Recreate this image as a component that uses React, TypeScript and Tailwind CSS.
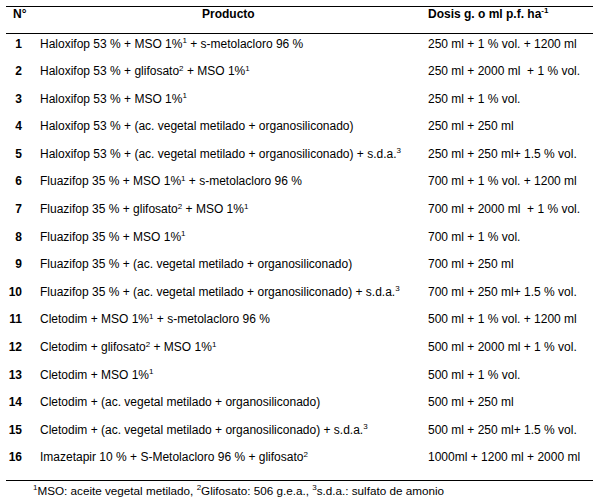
import React from "react";

type Row = { n: string; p: React.ReactNode; d: string };

const S = ({ c }: { c: string }) => <sup className="text-[8px] top-[-0.55em]">{c}</sup>;

const rows: Row[] = [
  { n: "1", p: <>Haloxifop 53 % + MSO 1%<S c="1" /> + s-metolacloro 96 %</>, d: "250 ml + 1 % vol. + 1200 ml" },
  { n: "2", p: <>Haloxifop 53 % + glifosato<S c="2" /> + MSO 1%<S c="1" /></>, d: "250 ml + 2000 ml\u00a0 + 1 % vol." },
  { n: "3", p: <>Haloxifop 53 % + MSO 1%<S c="1" /></>, d: "250 ml + 1 % vol." },
  { n: "4", p: <>Haloxifop 53 % + (ac. vegetal metilado + organosiliconado)</>, d: "250 ml + 250 ml" },
  { n: "5", p: <>Haloxifop 53 % + (ac. vegetal metilado + organosiliconado) + s.d.a.<S c="3" /></>, d: "250 ml + 250 ml+ 1.5 % vol." },
  { n: "6", p: <>Fluazifop 35 % + MSO 1%<S c="1" /> + s-metolacloro 96 %</>, d: "700 ml + 1 % vol. + 1200 ml" },
  { n: "7", p: <>Fluazifop 35 % + glifosato<S c="2" /> + MSO 1%<S c="1" /></>, d: "700 ml + 2000 ml\u00a0 + 1 % vol." },
  { n: "8", p: <>Fluazifop 35 % + MSO 1%<S c="1" /></>, d: "700 ml + 1 % vol." },
  { n: "9", p: <>Fluazifop 35 % + (ac. vegetal metilado + organosiliconado)</>, d: "700 ml + 250 ml" },
  { n: "10", p: <>Fluazifop 35 % + (ac. vegetal metilado + organosiliconado) + s.d.a.<S c="3" /></>, d: "700 ml + 250 ml+ 1.5 % vol." },
  { n: "11", p: <>Cletodim + MSO 1%<S c="1" /> + s-metolacloro 96 %</>, d: "500 ml + 1 % vol. + 1200 ml" },
  { n: "12", p: <>Cletodim + glifosato<S c="2" /> + MSO 1%<S c="1" /></>, d: "500 ml + 2000 ml + 1 % vol." },
  { n: "13", p: <>Cletodim + MSO 1%<S c="1" /></>, d: "500 ml + 1 % vol." },
  { n: "14", p: <>Cletodim + (ac. vegetal metilado + organosiliconado)</>, d: "500 ml + 250 ml" },
  { n: "15", p: <>Cletodim + (ac. vegetal metilado + organosiliconado) + s.d.a.<S c="3" /></>, d: "500 ml + 250 ml+ 1.5 % vol." },
  { n: "16", p: <>Imazetapir 10 % + S-Metolacloro 96 % + glifosato<S c="2" /></>, d: "1000ml + 1200 ml + 2000 ml" },
];

export default function App() {
  return (
    <div
      className="w-[600px] h-[497px] bg-white text-black text-[12px] leading-[14px] overflow-hidden"
      style={{ fontFamily: '"Liberation Sans", Arial, sans-serif' }}
    >
      <div className="ml-[6px] w-[587px] pt-[6px]">
        <div className="border-t border-black" />
        <div className="flex h-[26px] font-bold">
          <div className="w-[34px] pl-[7px]">N°</div>
          <div className="w-[388px] pl-[162px]">Producto</div>
          <div className="flex-1">
            Dosis g. o ml p.f. ha<sup className="text-[8px] top-[-0.6em]">-1</sup>
          </div>
        </div>
        <div className="border-t border-black" />
        <div className="flex flex-col">
          {rows.map((r) => (
            <div key={r.n} className="flex h-[27.6px] pt-[2.5px] whitespace-pre">
              <div className="w-[16px] text-right font-bold">{r.n}</div>
              <div className="w-[18px]" />
              <div className="w-[388px]">{r.p}</div>
              <div className="flex-1">{r.d}</div>
            </div>
          ))}
        </div>
        <div className="mt-[4px] border-t border-black" />
        <div className="pl-[27px] pt-[3px] text-[11.7px] leading-[13px]">
          <S c="1" />MSO: aceite vegetal metilado, <S c="2" />Glifosato: 506 g.e.a., <S c="3" />s.d.a.: sulfato de amonio
        </div>
      </div>
    </div>
  );
}
